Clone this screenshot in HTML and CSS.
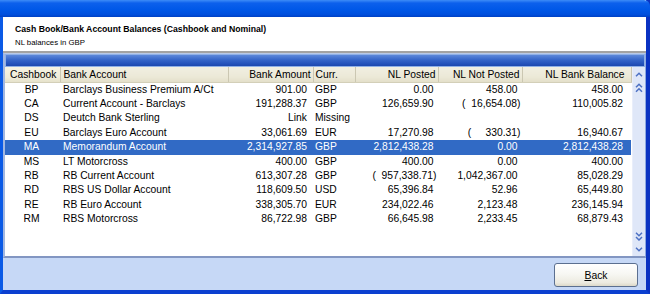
FILE: index.html
```html
<!DOCTYPE html>
<html lang="en">
<head>
    <meta charset="UTF-8">
    <title>Cash Book/Bank Account Balances</title>
    <link rel="stylesheet" href="styles.css">
</head>
<body>
    <div class="window">
        <div class="titlebar"></div>

        <div class="header">
            <div class="title">Cash Book/Bank Account Balances (Cashbook and Nominal)</div>
            <div class="subtitle">NL balances in GBP</div>
        </div>

        <div class="grid">
            <div class="band"></div>
            <div class="grid-body">
                <table class="balances">
                    <colgroup>
                        <col class="w-code">
                        <col class="w-name">
                        <col class="w-amount">
                        <col class="w-curr">
                        <col class="w-posted">
                        <col class="w-notposted">
                        <col class="w-balance">
                    </colgroup>
                    <thead>
                        <tr>
                            <th class="code">Cashbook</th>
                            <th class="name">Bank Account</th>
                            <th class="num">Bank Amount</th>
                            <th class="curr">Curr.</th>
                            <th class="num">NL Posted</th>
                            <th class="num">NL Not Posted</th>
                            <th class="num last">NL Bank Balance</th>
                        </tr>
                    </thead>
                    <tbody>
                        <tr>
                            <td class="code">BP</td><td class="name">Barclays Business Premium A/Ct</td>
                            <td class="num amt">901.00</td><td class="curr">GBP</td>
                            <td class="num">0.00</td><td class="num">458.00</td><td class="num last">458.00</td>
                        </tr>
                        <tr>
                            <td class="code">CA</td><td class="name">Current Account - Barclays</td>
                            <td class="num amt">191,288.37</td><td class="curr">GBP</td>
                            <td class="num">126,659.90</td><td class="num neg">(  16,654.08)</td><td class="num last">110,005.82</td>
                        </tr>
                        <tr>
                            <td class="code">DS</td><td class="name">Deutch Bank Sterling</td>
                            <td class="num amt">Link</td><td class="curr">Missing</td>
                            <td class="num"></td><td class="num"></td><td class="num last"></td>
                        </tr>
                        <tr>
                            <td class="code">EU</td><td class="name">Barclays Euro Account</td>
                            <td class="num amt">33,061.69</td><td class="curr">EUR</td>
                            <td class="num">17,270.98</td><td class="num neg">(     330.31)</td><td class="num last">16,940.67</td>
                        </tr>
                        <tr class="selected">
                            <td class="code">MA</td><td class="name">Memorandum Account</td>
                            <td class="num amt">2,314,927.85</td><td class="curr">GBP</td>
                            <td class="num">2,812,438.28</td><td class="num">0.00</td><td class="num last">2,812,438.28</td>
                        </tr>
                        <tr>
                            <td class="code">MS</td><td class="name">LT Motorcross</td>
                            <td class="num amt">400.00</td><td class="curr">GBP</td>
                            <td class="num">400.00</td><td class="num">0.00</td><td class="num last">400.00</td>
                        </tr>
                        <tr>
                            <td class="code">RB</td><td class="name">RB Current Account</td>
                            <td class="num amt">613,307.28</td><td class="curr">GBP</td>
                            <td class="num neg">(  957,338.71)</td><td class="num">1,042,367.00</td><td class="num last">85,028.29</td>
                        </tr>
                        <tr>
                            <td class="code">RD</td><td class="name">RBS US Dollar Account</td>
                            <td class="num amt">118,609.50</td><td class="curr">USD</td>
                            <td class="num">65,396.84</td><td class="num">52.96</td><td class="num last">65,449.80</td>
                        </tr>
                        <tr>
                            <td class="code">RE</td><td class="name">RB Euro Account</td>
                            <td class="num amt">338,305.70</td><td class="curr">EUR</td>
                            <td class="num">234,022.46</td><td class="num">2,123.48</td><td class="num last">236,145.94</td>
                        </tr>
                        <tr>
                            <td class="code">RM</td><td class="name">RBS Motorcross</td>
                            <td class="num amt">86,722.98</td><td class="curr">GBP</td>
                            <td class="num">66,645.98</td><td class="num">2,233.45</td><td class="num last">68,879.43</td>
                        </tr>
                    </tbody>
                </table>

                <div class="scrollbar">
                    <div class="scroll-group top">
                        <svg class="chev" width="8" height="5" viewBox="0 0 8 5"><path d="M1 4.2 L4 1.2 L7 4.2"/></svg>
                        <svg class="chev2" width="8" height="10" viewBox="0 0 8 10"><path d="M1 4.2 L4 1.2 L7 4.2 M1 8.7 L4 5.7 L7 8.7"/></svg>
                    </div>
                    <div class="scroll-group bottom">
                        <svg class="chev2" width="8" height="9" viewBox="0 0 8 9"><path d="M1 0.8 L4 3.8 L7 0.8 M1 5 L4 8 L7 5"/></svg>
                        <svg class="chev" width="8" height="5" viewBox="0 0 8 5"><path d="M1 0.8 L4 3.8 L7 0.8"/></svg>
                    </div>
                </div>
            </div>
        </div>

        <div class="footer">
            <button class="btn"><u>B</u>ack</button>
        </div>
    </div>
</body>
</html>
```

FILE: styles.css
```css
body {
    margin: 0;
    background: #ffffff;
    font-family: "Liberation Sans", Arial, sans-serif;
}
.window {
    width: 643px;
    height: 290px;
    border-left: 3px solid #0a5ae6;
    border-right: 4px solid #0a32c2;
    border-bottom: 4px solid #0b3fd0;
    display: flex;
    flex-direction: column;
}
.titlebar {
    height: 17px;
    margin-left: -3px;
    margin-right: -4px;
    background: linear-gradient(to bottom, #3d8cf7 0%, #0c60ec 18%, #0058e8 55%, #004fdd 85%, #0041c4 100%);
    border-top-right-radius: 6px;
}
.header {
    height: 34px;
    background: #ffffff;
    border-bottom: 2px solid #a3a3a3;
    padding-left: 12px;
}
.title {
    font-size: 8.7px;
    font-weight: bold;
    line-height: 11px;
    margin-top: 7.4px;
    color: #000;
}
.subtitle {
    font-size: 7.8px;
    line-height: 11px;
    margin-top: 2px;
    color: #000;
}
.grid {
    height: 205px;
    box-sizing: border-box;
    border-top: 1px solid #b9c9e8;
    border-left: 2px solid #a2b7e0;
    border-right: 1px solid #8eaae0;
    border-bottom: 2px solid #8296c2;
    background: #ffffff;
    display: flex;
    flex-direction: column;
}
.band {
    height: 13px;
    box-sizing: border-box;
    border: 1px solid #8fb0e6;
    background: linear-gradient(to bottom, #5d88da 0%, #3565c8 45%, #2452bb 80%, #1c48ae 100%);
}
.grid-body {
    flex: 1;
    display: flex;
}
.balances {
    width: 626px;
    table-layout: fixed;
    border-collapse: collapse;
    font-size: 10.3px;
    align-self: flex-start;
}
.w-code { width: 55px; }
.w-name { width: 168px; }
.w-amount { width: 85px; }
.w-curr { width: 42px; }
.w-posted { width: 83px; }
.w-notposted { width: 84px; }
.w-balance { width: 109px; }

.balances th {
    height: 15px;
    box-sizing: border-box;
    padding: 0 2px;
    font-weight: normal;
    text-align: left;
    white-space: nowrap;
    overflow: hidden;
    background: linear-gradient(to bottom, #f1efe2 0%, #ebe8d6 70%, #e3dfc9 100%);
    border-right: 1px solid #cbc7b2;
    border-bottom: 1px solid #d3cfb8;
    color: #000;
}
.balances th.code {
    padding-left: 5px;
    background: linear-gradient(to bottom, #f6f3e2 0%, #efecd9 70%, #e6e2cb 100%);
}
.balances th.name { padding-left: 3px; }
.balances th.num { text-align: right; }
.balances th.last { padding-right: 6px; }

.balances td {
    height: 14.4px;
    padding: 0;
    line-height: 14.4px;
    white-space: nowrap;
    overflow: hidden;
    color: #000;
}
.balances td.code { text-align: center; padding-right: 2px; }
.balances td.name { padding-left: 3px; }
.balances td.curr { padding-left: 2px; }
.balances td.num { text-align: right; padding-right: 4.5px; }
.balances td.amt { padding-right: 6px; }
.balances td.last { padding-right: 8px; }
.balances td.neg {
    padding-right: 1.5px;
    white-space: pre;
}

.selected td {
    background: #316ac5;
    color: #ffffff;
}

.scrollbar {
    width: 14px;
    background: #dfe7f8;
    border-left: 1px solid #e9eefa;
    box-sizing: border-box;
    display: flex;
    flex-direction: column;
    justify-content: space-between;
    align-items: center;
}
.scroll-group {
    display: flex;
    flex-direction: column;
    align-items: center;
}
.scroll-group.top {
    padding-top: 4.5px;
    gap: 6px;
}
.scroll-group.bottom {
    padding-bottom: 4px;
    gap: 6px;
}
.scrollbar svg path {
    fill: none;
    stroke: #4d71c4;
    stroke-width: 1.5;
}

.footer {
    flex: 1;
    background: #c6d8f6;
    display: flex;
    justify-content: flex-end;
    align-items: flex-start;
    padding: 5px 8px 0 0;
}
.btn {
    width: 84px;
    height: 24px;
    border: 1px solid #5b6f90;
    border-radius: 3px;
    background: linear-gradient(to bottom, #ffffff 0%, #f7f7f3 45%, #eceae0 85%, #dcd8c8 100%);
    font-family: "Liberation Sans", Arial, sans-serif;
    font-size: 10.4px;
    color: #000;
    padding: 0;
}
```
